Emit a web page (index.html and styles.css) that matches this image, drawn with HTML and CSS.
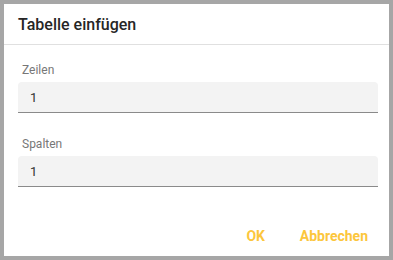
FILE: index.html
```html
<!DOCTYPE html>
<html lang="de">
<head>
<meta charset="utf-8">
<link rel="stylesheet" href="styles.css">
</head>
<body>
<div class="dialog">
  <div class="header">Tabelle einfügen</div>
  <div class="content">
    <div class="field">
      <label class="label">Zeilen</label>
      <div class="input">1</div>
    </div>
    <div class="field">
      <label class="label">Spalten</label>
      <div class="input">1</div>
    </div>
  </div>
  <div class="actions">
    <button class="btn">OK</button>
    <button class="btn">Abbrechen</button>
  </div>
</div>
</body>
</html>
```
FILE: styles.css
```css
html, body {
  margin: 0;
  padding: 0;
  width: 393px;
  height: 260px;
  background: #a6a6a6;
  font-family: Roboto, "Liberation Sans", sans-serif;
}
body {
  padding: 4px;
  box-sizing: border-box;
}
.dialog {
  width: 385px;
  height: 252px;
  background: #fff;
  display: flex;
  flex-direction: column;
  box-sizing: border-box;
}
.header {
  height: 40px;
  border-bottom: 1px solid #e0e0e0;
  padding: 0 14px;
  display: flex;
  align-items: center;
  font-size: 16px;
  font-weight: 500;
  color: #262626;
  box-sizing: content-box;
}
.content {
  padding: 17px 11px 0 14px;
  display: flex;
  flex-direction: column;
  gap: 23px;
}
.field {
  display: flex;
  flex-direction: column;
}
.label {
  font-size: 12px;
  color: #777;
  line-height: 16px;
  padding-left: 4px;
  margin-bottom: 4px;
}
.input {
  height: 30px;
  background: #f3f3f3;
  border-bottom: 1px solid #8a8a8a;
  border-radius: 4px 4px 0 0;
  padding: 0 12px;
  display: flex;
  align-items: center;
  font-size: 13px;
  color: #333;
}
.actions {
  margin-top: auto;
  display: flex;
  justify-content: flex-end;
  gap: 4px;
  padding: 0 13px 2px 0;
}
.btn {
  border: none;
  background: transparent;
  font-family: Roboto, "Liberation Sans", sans-serif;
  font-size: 14px;
  font-weight: 700;
  color: #fcc63c;
  height: 36px;
  min-width: 64px;
  padding: 0 8px;
  cursor: pointer;
}
```
